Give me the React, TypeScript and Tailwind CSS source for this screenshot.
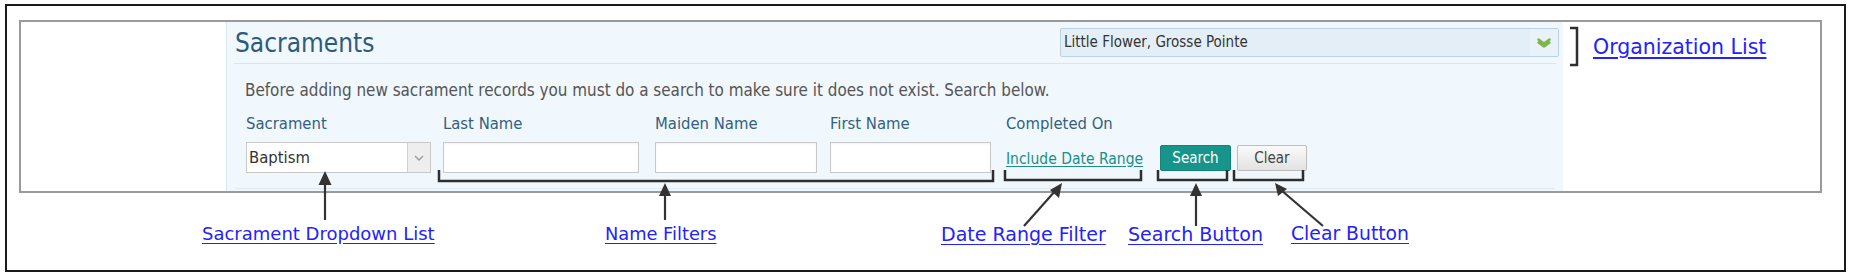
import React from "react";

const formFont = { fontFamily: "'DejaVu Sans Condensed', 'DejaVu Sans', sans-serif" };
const noteFont = { fontFamily: "'DejaVu Sans', Verdana, sans-serif" };

function FieldLabel({ children }: { children: React.ReactNode }) {
    return <div className="text-[16.5px] leading-5 text-[#33607f] mb-[8px] whitespace-nowrap">{children}</div>;
}

function TextBox({ width }: { width: string }) {
    return <div className={`${width} h-[31px] bg-white border border-[#c9c9c9] shadow-[inset_0_1px_2px_rgba(0,0,0,0.06)]`} />;
}

function Callout({ left, top, size, children }: { left: string; top: string; size: string; children: React.ReactNode }) {
    return (
        <a href="#" className={`absolute ${left} ${top} ${size} leading-none text-[#2222ff] underline underline-offset-[3px] whitespace-nowrap`} style={noteFont}>
            {children}
        </a>
    );
}

export default function App() {
    return (
        <div className="relative w-[1850px] h-[280px] bg-white overflow-hidden">
            <div className="ml-[5px] mt-[4px] w-[1841px] h-[268px] border-2 border-[#1a1a1a]">
                <div className="ml-[12px] mt-[14px] w-[1803px] h-[173px] border-2 border-[#9a9a9a] flex" style={formFont}>
                    <div className="w-[205px] shrink-0 bg-white" />

                    <div className="w-[1337px] shrink-0 bg-[#f0f7fd] border-l border-[#dce8f1] flex flex-col">
                        <div className="mx-[7px] h-[42px] flex items-center justify-between border-b border-[#d9e5ee]">
                            <h1 className="pl-[1px] text-[26px] leading-none text-[#2d5c7b]">Sacraments</h1>
                            <div className="w-[499px] h-[29px] mr-[-3px] flex items-center bg-[#e3eef7] border border-[#bcd2e2] rounded-[2px]">
                                <span className="flex-1 pl-[3px] text-[15px] text-[#333]">Little Flower, Grosse Pointe</span>
                                <span className="w-[28px] h-full flex items-center justify-center bg-[#e9f2f9]">
                                    <svg width="14" height="10" viewBox="0 0 14 10">
                                        <path d="M1.5 1.5 L7 5.5 L12.5 1.5 M1.5 4.5 L7 8.5 L12.5 4.5" fill="none" stroke="#7cb54a" strokeWidth="2.4" strokeLinejoin="round" strokeLinecap="round" />
                                    </svg>
                                </span>
                            </div>
                        </div>

                        <p className="pl-[18px] mt-[16px] text-[16.9px] leading-5 text-[#555] whitespace-nowrap">
                            Before adding new sacrament records you must do a search to make sure it does not exist. Search below.
                        </p>

                        <div className="pl-[19px] mt-[14px] flex items-end">
                            <div>
                                <FieldLabel>Sacrament</FieldLabel>
                                <div className="w-[185px] h-[31px] flex bg-white border border-[#c9c9c9]">
                                    <span className="flex-1 pl-[2px] text-[16.5px] leading-[29px] text-[#333]">Baptism</span>
                                    <span className="w-[23px] flex items-center justify-center bg-[#eeeeee] border-l border-[#d2d2d2]">
                                        <svg width="10" height="6" viewBox="0 0 10 6">
                                            <path d="M1 1 L5 5 L9 1" fill="none" stroke="#9a9a9a" strokeWidth="1.3" />
                                        </svg>
                                    </span>
                                </div>
                            </div>
                            <div className="ml-[12px]">
                                <FieldLabel>Last Name</FieldLabel>
                                <TextBox width="w-[196px]" />
                            </div>
                            <div className="ml-[16px]">
                                <FieldLabel>Maiden Name</FieldLabel>
                                <TextBox width="w-[162px]" />
                            </div>
                            <div className="ml-[13px]">
                                <FieldLabel>First Name</FieldLabel>
                                <TextBox width="w-[161px]" />
                            </div>
                            <div className="ml-[15px] w-[140px]">
                                <FieldLabel>Completed On</FieldLabel>
                                <a href="#" className="block h-[31px] pt-[7px] text-[15.5px] leading-5 text-[#1a8f89] underline underline-offset-2 whitespace-nowrap">
                                    Include Date Range
                                </a>
                            </div>
                            <button className="ml-[14px] mb-[2px] w-[71px] h-[26px] bg-[#17958b] border border-[#12847b] rounded-[2px] text-[15px] text-white">
                                Search
                            </button>
                            <button className="ml-[6px] mb-[2px] w-[70px] h-[26px] bg-gradient-to-b from-[#fafafa] to-[#e2e2e2] border border-[#bdbdbd] rounded-[2px] text-[15px] text-[#444]">
                                Clear
                            </button>
                        </div>

                        <div className="mt-auto mb-[2px] mx-[8px] border-b border-[#e1e9f0]" />
                    </div>

                    <div className="flex-1 bg-white" />
                </div>
            </div>

            <svg className="absolute left-0 top-0 pointer-events-none" width="1850" height="280" viewBox="0 0 1850 280">
                <g fill="none" stroke="#2e2e2e" strokeWidth="2.5">
                    <path d="M1570 28 H1577 V65 H1570" />
                    <path d="M439 170 V181 H993 V170" />
                    <path d="M1005 170 V180 H1141 V170" />
                    <path d="M1158 170 V180 H1227 V170" />
                    <path d="M1234 170 V180 H1303 V170" />
                </g>
                <g stroke="#333" strokeWidth="2.2">
                    <line x1="325" y1="220" x2="325" y2="182" />
                    <line x1="665" y1="220" x2="665" y2="192" />
                    <line x1="1024" y1="226" x2="1056" y2="190" />
                    <line x1="1196" y1="226" x2="1196" y2="192" />
                    <line x1="1323" y1="226" x2="1281" y2="190" />
                </g>
                <g fill="#333">
                    <polygon points="325,171 318.5,185 331.5,185" />
                    <polygon points="665,183 659,196 671,196" />
                    <polygon points="1062,183 1059,198 1050,190" />
                    <polygon points="1196,183 1190,196 1202,196" />
                    <polygon points="1275,183 1287,189 1278,196" />
                </g>
            </svg>

            <Callout left="left-[1593px]" top="top-[37px]" size="text-[20.5px]">Organization List</Callout>
            <Callout left="left-[202px]" top="top-[225px]" size="text-[18px]">Sacrament Dropdown List</Callout>
            <Callout left="left-[605px]" top="top-[225px]" size="text-[17.8px]">Name Filters</Callout>
            <Callout left="left-[941px]" top="top-[225px]" size="text-[19px]">Date Range Filter</Callout>
            <Callout left="left-[1128px]" top="top-[225px]" size="text-[19px]">Search Button</Callout>
            <Callout left="left-[1291px]" top="top-[225px]" size="text-[18.8px]">Clear Button</Callout>
        </div>
    );
}
